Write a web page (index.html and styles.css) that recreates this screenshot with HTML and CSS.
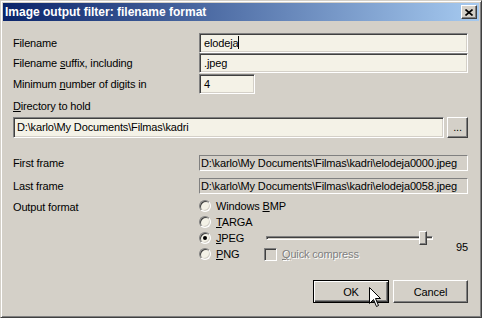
FILE: index.html
```html
<!DOCTYPE html>
<html lang="en">

<head>
  <meta charset="UTF-8">
  <meta name="viewport" content="width=device-width, initial-scale=1.0">
  <title>Image output filter: filename format</title>
  <link rel="stylesheet" href="styles.css">
</head>

<body>
  <div class="window">
    <div class="titlebar">
      <span class="title">Image output filter: filename format</span>
      <div class="close">
        <svg width="8" height="7" viewBox="0 0 8 7">
          <path d="M0.5 0.5 L7.5 6.5 M7.5 0.5 L0.5 6.5" stroke="#000" stroke-width="1.6" fill="none" />
        </svg>
      </div>
    </div>

    <div class="content">
      <div class="row">
        <span>Filename</span>
        <div class="edit">elodeja<span class="caret"></span></div>
      </div>
      <div class="row">
        <span>Filename <u>s</u>uffix, including</span>
        <div class="edit">.jpeg</div>
      </div>
      <div class="row row-digits">
        <span>Minimum <u>n</u>umber of digits in</span>
        <div class="edit short">4</div>
      </div>

      <div class="dir-label"><u>D</u>irectory to hold</div>
      <div class="dir-row">
        <div class="edit dir">D:\karlo\My Documents\Filmas\kadri</div>
        <div class="btn browse">...</div>
      </div>

      <div class="row ro-row first">
        <span>First frame</span>
        <div class="ro">D:\karlo\My Documents\Filmas\kadri\elodeja0000.jpeg</div>
      </div>
      <div class="row ro-row">
        <span>Last frame</span>
        <div class="ro">D:\karlo\My Documents\Filmas\kadri\elodeja0058.jpeg</div>
      </div>

      <div class="format">
        <span class="format-label">Output format</span>
        <div class="options">
          <div class="opt"><span class="radio"></span><span>Windows <u>B</u>MP</span></div>
          <div class="opt r2"><span class="radio"></span><span><u>T</u>ARGA</span></div>
          <div class="opt r3"><span class="radio checked"></span><span><u>J</u>PEG</span></div>
          <div class="opt r4"><span class="radio"></span><span><u>P</u>NG</span></div>
          <div class="slider">
            <div class="track"></div>
            <div class="thumb"></div>
          </div>
          <div class="quality">95</div>
          <div class="check"><span class="box"></span><span class="disabled"><u>Q</u>uick compress</span></div>
        </div>
      </div>

      <div class="buttons">
        <div class="btn default">OK</div>
        <div class="btn">Cancel</div>
      </div>
    </div>

    <svg class="cursor" width="13" height="21" viewBox="0 0 13 21">
      <path d="M0.5 0.5 L0.5 16.5 L4.5 12.5 L7.5 19.5 L9.5 18.5 L6.5 11.5 L11.5 11.5 Z" fill="#fff" stroke="#000" stroke-width="1" />
    </svg>
  </div>
</body>

</html>
```

FILE: styles.css
```css
body {
  margin: 0;
  font-family: "Liberation Sans", Arial, sans-serif;
  font-size: 11px;
  letter-spacing: -0.15px;
  color: #000;
}

u {
  text-underline-offset: 1px;
}

/* window frame */
.window {
  position: relative;
  width: 482px;
  height: 318px;
  box-sizing: border-box;
  padding: 2px;
  background: #d4d0c8;
  border: 1px solid;
  border-color: #d4d0c8 #404040 #404040 #d4d0c8;
  box-shadow: inset 1px 1px #fff, inset -1px -1px #808080;
}

.titlebar {
  height: 18px;
  display: flex;
  align-items: center;
  justify-content: space-between;
  padding: 0 2px;
  background: linear-gradient(to right, #0a246a, #a6caf0);
}

.title {
  color: #fff;
  font-weight: bold;
  font-size: 12px;
  letter-spacing: 0;
}

.close {
  width: 16px;
  height: 14px;
  box-sizing: border-box;
  display: flex;
  align-items: center;
  justify-content: center;
  background: #d4d0c8;
  border: 1px solid;
  border-color: #fff #404040 #404040 #fff;
  box-shadow: inset -1px -1px #808080;
}

.content {
  padding: 12px 11px 0 10px;
}

/* label + field rows */
.row {
  display: grid;
  grid-template-columns: 186px 1fr;
  align-items: center;
  height: 20px;
}

.row-digits {
  margin-top: 1px;
}

.edit {
  height: 20px;
  box-sizing: border-box;
  padding: 0 4px;
  line-height: 18px;
  background: #f4f2e7;
  border: 1px solid;
  border-color: #808080 #fff #fff #808080;
  box-shadow: inset 1px 1px #404040, inset -1px -1px #d4d0c8;
  white-space: nowrap;
  overflow: hidden;
}

.edit.short {
  width: 56px;
}

.caret {
  display: inline-block;
  width: 1px;
  height: 13px;
  background: #000;
  vertical-align: -2px;
}

.dir-label {
  margin-top: 6px;
  margin-bottom: 4px;
  line-height: 13px;
}

.dir-row {
  display: grid;
  grid-template-columns: 1fr 21px;
  gap: 3px;
  height: 21px;
}

.edit.dir {
  height: 21px;
  padding-left: 3px;
  line-height: 19px;
}

.ro-row {
  height: 16px;
}

.ro-row.first {
  margin-top: 17px;
  margin-bottom: 7px;
}

.ro {
  height: 16px;
  box-sizing: border-box;
  padding-left: 1px;
  line-height: 14px;
  border: 1px solid;
  border-color: #808080 #fff #fff #808080;
  white-space: nowrap;
  overflow: hidden;
}

/* output format */
.format {
  display: grid;
  grid-template-columns: 186px 1fr;
  margin-top: 4px;
}

.format-label {
  line-height: 16px;
  padding-top: 1px;
}

.options {
  display: grid;
  grid-template-columns: 65px 169px 1fr;
  grid-template-rows: repeat(4, 16px);
}

.opt {
  grid-column: 1 / span 2;
  display: flex;
  align-items: center;
  gap: 5px;
  white-space: nowrap;
}

.opt.r2 {
  grid-row: 2;
}

.opt.r3 {
  grid-row: 3;
  grid-column: 1;
}

.opt.r4 {
  grid-row: 4;
  grid-column: 1;
}

.radio {
  position: relative;
  flex: none;
  width: 12px;
  height: 12px;
  box-sizing: border-box;
  border-radius: 50%;
  background: #f4f2e7;
  border: 1px solid;
  border-color: #808080 #fff #fff #808080;
  box-shadow: inset 1px 1px #404040, inset -1px -1px #d4d0c8;
}

.radio.checked::after {
  content: "";
  position: absolute;
  left: 3px;
  top: 3px;
  width: 4px;
  height: 4px;
  border-radius: 50%;
  background: #000;
}

.slider {
  grid-column: 2;
  grid-row: 3;
  position: relative;
}

.track {
  position: absolute;
  left: 2px;
  right: 0;
  top: 6px;
  height: 4px;
  box-sizing: border-box;
  border: 1px solid;
  border-color: #808080 #fff #fff #808080;
  box-shadow: inset 1px 1px #404040;
}

.thumb {
  position: absolute;
  left: 155px;
  top: 1px;
  width: 8px;
  height: 14px;
  box-sizing: border-box;
  background: #d4d0c8;
  border: 1px solid;
  border-color: #fff #404040 #404040 #fff;
  box-shadow: inset -1px -1px #808080;
}

.quality {
  grid-column: 3;
  grid-row: 3 / span 2;
  justify-self: end;
  align-self: center;
  padding-top: 2px;
}

.check {
  grid-column: 2 / span 2;
  grid-row: 4;
  display: flex;
  align-items: center;
  gap: 5px;
}

.box {
  flex: none;
  width: 13px;
  height: 13px;
  box-sizing: border-box;
  background: #d4d0c8;
  border: 1px solid;
  border-color: #808080 #fff #fff #808080;
  box-shadow: inset 1px 1px #404040, inset -1px -1px #d4d0c8;
}

.disabled {
  color: #808080;
  text-shadow: 1px 1px #fff;
}

/* push buttons */
.btn {
  box-sizing: border-box;
  display: flex;
  align-items: center;
  justify-content: center;
  background: #d4d0c8;
  border: 1px solid;
  border-color: #fff #404040 #404040 #fff;
  box-shadow: inset -1px -1px #808080;
}

.browse {
  height: 21px;
  align-items: flex-end;
  padding-bottom: 4px;
  line-height: 11px;
}

.buttons {
  display: flex;
  justify-content: flex-end;
  gap: 4px;
  margin-top: 18px;
}

.buttons .btn {
  width: 75px;
  height: 23px;
}

.btn.default {
  width: 76px;
  border-color: #000;
  box-shadow: inset 1px 1px #fff, inset -1px -1px #404040, inset -2px -2px #808080;
}

.cursor {
  position: absolute;
  left: 368px;
  top: 286px;
}
```
